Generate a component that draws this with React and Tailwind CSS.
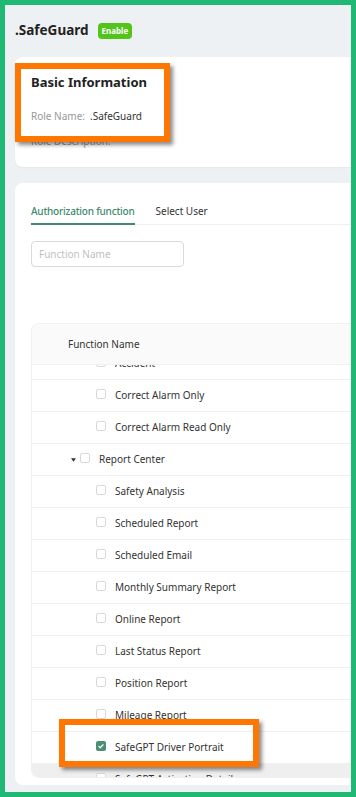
import React from 'react';

const rows = [
  { name: 'Accident', level: 2 },
  { name: 'Correct Alarm Only', level: 2 },
  { name: 'Correct Alarm Read Only', level: 2 },
  { name: 'Report Center', level: 1 },
  { name: 'Safety Analysis', level: 2 },
  { name: 'Scheduled Report', level: 2 },
  { name: 'Scheduled Email', level: 2 },
  { name: 'Monthly Summary Report', level: 2 },
  { name: 'Online Report', level: 2 },
  { name: 'Last Status Report', level: 2 },
  { name: 'Position Report', level: 2 },
  { name: 'Mileage Report', level: 2 },
  { name: 'SafeGPT Driver Portrait', level: 2, checked: true },
  { name: 'SafeGPT Activation Detail', level: 2, hover: true },
];

const Checkbox = ({ checked }) =>
  checked ? (
    <span className="w-[10px] h-[10px] rounded-[2px] bg-[#4d8f75] flex items-center justify-center shrink-0">
      <svg className="w-[8px] h-[8px]" viewBox="0 0 10 10" fill="none" stroke="white" strokeWidth="1.6">
        <path d="M2 5.2l2 2 4-4.2" />
      </svg>
    </span>
  ) : (
    <span className="w-[10px] h-[10px] rounded-[2px] border border-[#d9d9d9] bg-white shrink-0" />
  );

const App = () => {
  return (
    <div className="w-[356px] h-[797px] border-[5px] border-[#1fb874] bg-[#eef1f4] overflow-hidden relative font-['Noto_Sans',sans-serif] text-[#333]">
      <div className="pl-[10px] w-[400px]">
        {/* Header */}
        <div className="pt-[17px] h-[34px] flex items-center gap-[9px]">
          <span className="text-[13.5px] font-bold text-[#222] leading-[17px]">.SafeGuard</span>
          <span className="bg-[#52c41a] text-white text-[8px] font-bold rounded-[4px] px-[4px] h-[16px] flex items-center">Enable</span>
        </div>

        {/* Basic information card */}
        <div className="mt-[18px] bg-white rounded-lg h-[110px] pl-[16px] pt-[17px] shadow-[0_1px_2px_rgba(0,0,0,0.04)]">
          <div className="text-[13px] font-bold text-[#222] leading-[16px]">Basic Information</div>
          <div className="mt-[19px] text-[10px] leading-[14px] flex">
            <span className="text-[#999]">Role Name:</span>
            <span className="text-[#333] ml-[5px]">.SafeGuard</span>
          </div>
          <div className="mt-[11px] text-[10px] leading-[14px] text-[#999]">Role Description:</div>
        </div>

        {/* Authorization card */}
        <div className="mt-[16px] bg-white rounded-lg h-[602px] pl-[16px] pt-[21px]">
          <div className="flex gap-[21px] border-b border-[#f0f0f0] text-[10px] leading-[14px]">
            <div className="pb-[5px] border-b-2 border-[#3f8a6e] text-[#3f8a6e] font-medium tracking-[-0.2px] -mb-px">Authorization function</div>
            <div className="pb-[5px] text-[#333]">Select User</div>
          </div>

          <div className="mt-[16px] w-[153px] h-[26px] border border-[#d9d9d9] rounded-[4px] flex items-center px-[7px] text-[10px] text-[#bfbfbf]">
            Function Name
          </div>

          {/* Table */}
          <div className="mt-[56px] border border-r-0 border-[#f0f0f0] rounded-l-lg overflow-hidden">
            <div className="h-[41px] bg-[#fafafa] border-b border-[#f0f0f0] flex items-center pl-[36px] text-[10px] text-[#333]">
              Function Name
            </div>
            <div className="h-[412px] overflow-hidden">
              <div className="-mt-[17px]">
                {rows.map((r, i) => (
                  <div
                    key={i}
                    className={`h-[32px] border-b border-[#f0f0f0] flex items-center text-[10px] text-[#333] ${r.hover ? 'bg-[#efefef]' : 'bg-white'} ${r.level === 1 ? 'pl-[39px]' : 'pl-[64px]'}`}
                  >
                    {r.level === 1 && (
                      <svg className="w-[5px] h-[4px] mr-[4px]" viewBox="0 0 6 4" fill="#333">
                        <path d="M0 0h6L3 4z" />
                      </svg>
                    )}
                    <span className="-mt-[3px] flex">
                      <Checkbox checked={r.checked} />
                    </span>
                    <span className="ml-[9px]">{r.name}</span>
                  </div>
                ))}
              </div>
            </div>
          </div>
        </div>
      </div>

      {/* Annotation boxes */}
      <div className="absolute left-[10px] top-[58px] w-[155px] h-[79px] border-[6px] border-[#ff7700] shadow-[3px_3px_4px_rgba(0,0,0,0.45)]" />
      <div className="absolute left-[54px] top-[714px] w-[200px] h-[48px] border-[6px] border-[#ff7700] shadow-[3px_3px_4px_rgba(0,0,0,0.45)]" />
    </div>
  );
};

export default App;
